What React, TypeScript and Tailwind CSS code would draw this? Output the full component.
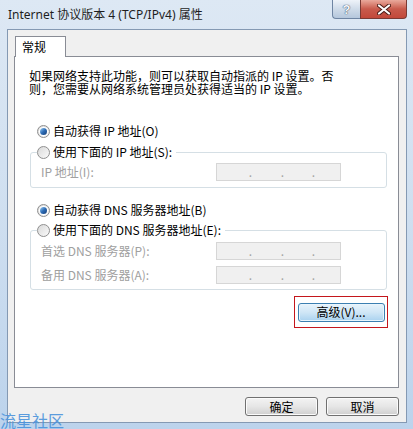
import type { ReactNode } from 'react'

function Radio({ checked }: { checked?: boolean }) {
    return (
        <span className="flex size-[13px] shrink-0 items-center justify-center rounded-full border border-[#8f8f8f] bg-gradient-to-br from-[#d9d9d9] to-[#fafafa]">
            {checked && (
                <span className="flex size-[9px] items-center justify-center rounded-full bg-white">
                    <span className="size-[7px] rounded-full bg-gradient-to-br from-[#9fd2f6] via-[#2d6cb5] to-[#173f78]" />
                </span>
            )}
        </span>
    )
}

function RadioRow({ checked, children, bg }: { checked?: boolean, children: ReactNode, bg?: boolean }) {
    return (
        <div className="relative z-10 ml-[22px] flex h-[14px] items-center">
            <div className={'flex items-center gap-[3px] pr-[4px] ' + (bg ? 'bg-white' : '')}>
                <Radio checked={checked} />
                <span className="leading-[14px]">{children}</span>
            </div>
        </div>
    )
}

function IpBox() {
    return (
        <div className="flex h-[18px] w-[125px] border border-[#d6d6d6] bg-[#f0f0f0] pl-[3px] text-[#a3a3a3]">
            <span className="w-[32px] text-right leading-[16px]">.</span>
            <span className="w-[32px] text-right leading-[16px]">.</span>
            <span className="w-[31px] text-right leading-[16px]">.</span>
        </div>
    )
}

function FieldRow({ label }: { label: string }) {
    return (
        <div className="flex items-center pl-[10px]">
            <span className="w-[175px] text-[#a0a0a0] leading-[14px]">{label}</span>
            <IpBox />
        </div>
    )
}

function WinButton({ children, focus, w }: { children: ReactNode, focus?: boolean, w: string }) {
    return (
        <button
            className={
                'flex h-[19px] items-center justify-center rounded-[3px] border leading-[14px] ' + w + ' ' +
                (focus
                    ? 'border-[#3c7fb1] bg-gradient-to-b from-[#e8f3fb] via-[#cfe6f6] to-[#a9d2ef] shadow-[inset_0_0_0_1px_#e9f5fd]'
                    : 'border-[#707070] bg-gradient-to-b from-[#f3f3f3] via-[#e6e6e6] to-[#cfcfcf] shadow-[inset_0_0_0_1px_#fbfbfb]')
            }
        >
            {children}
        </button>
    )
}

export default function App() {
    return (
        <div className="relative h-[429px] w-[413px] overflow-hidden bg-gradient-to-b from-[#dde8f4] via-[#cfdff0] to-[#bcd3ec] font-['Noto_Sans_CJK_SC','Noto_Sans',sans-serif] text-[12px] text-black">
            {/* title bar */}
            <div className="flex h-[29px] items-start justify-between pl-[8px] pr-[6px]">
                <span className="mt-[7px] font-['Noto_Sans','Noto_Sans_CJK_SC',sans-serif] text-[12px] leading-[16px] text-[#1e1e1e]">
                    Internet 协议版本 4 (TCP/IPv4) 属性
                </span>
                <div className="flex">
                    <div className="flex h-[19px] w-[28px] items-center justify-center rounded-bl-[4px] border border-t-0 border-r-0 border-[#6f85a3] bg-gradient-to-b from-[#eef3f9] via-[#cfdbe9] to-[#b5c7dc]">
                        <span className="font-['Liberation_Sans',sans-serif] text-[13px] font-bold leading-none text-[#f4f7fb] [text-shadow:0_0_1px_#3a4a60,0_0_1px_#3a4a60]">?</span>
                    </div>
                    <div className="flex h-[19px] w-[47px] items-center justify-center rounded-br-[4px] border border-t-0 border-[#7a3a34] bg-gradient-to-b from-[#e9a99c] via-[#c85a4c] to-[#c2483a]">
                        <svg width="14" height="11" viewBox="0 0 14 11">
                            <path d="M2 1.5 L12 9.5 M12 1.5 L2 9.5" stroke="#4a1a14" strokeWidth="4" strokeLinecap="round" />
                            <path d="M2 1.5 L12 9.5 M12 1.5 L2 9.5" stroke="#ffffff" strokeWidth="2.2" strokeLinecap="round" />
                        </svg>
                    </div>
                </div>
            </div>

            {/* client area */}
            <div className="ml-[7px] flex h-[394px] w-[400px] flex-col border border-[#8499b3] bg-[#f0f0f0] pt-[6px]">
                <div className="relative z-10 ml-[7px] flex h-[21px] w-[51px] items-center border border-b-0 border-[#898c95] bg-white pl-[6px] leading-[14px]">
                    常规
                </div>
                <div className="-mt-[1px] ml-[6px] flex h-[332px] w-[385px] flex-col border border-[#898c95] bg-white">
                    <p className="ml-[14px] mt-[12px] leading-[13px]">
                        如果网络支持此功能，则可以获取自动指派的 IP 设置。否<br />
                        则，您需要从网络系统管理员处获得适当的 IP 设置。
                    </p>

                    <div className="mt-[29px]">
                        <RadioRow checked>自动获得 IP 地址(O)</RadioRow>
                    </div>
                    <div className="mt-[7px]">
                        <RadioRow bg>使用下面的 IP 地址(S):</RadioRow>
                    </div>
                    <div className="-mt-[7px] ml-[15px] flex h-[36px] w-[357px] flex-col rounded-[3px] border border-[#d5dfe5] pt-[10px]">
                        <FieldRow label="IP 地址(I):" />
                    </div>

                    <div className="mt-[15px]">
                        <RadioRow checked>自动获得 DNS 服务器地址(B)</RadioRow>
                    </div>
                    <div className="mt-[6px]">
                        <RadioRow bg>使用下面的 DNS 服务器地址(E):</RadioRow>
                    </div>
                    <div className="-mt-[7px] ml-[15px] flex h-[60px] w-[357px] flex-col gap-[6px] rounded-[3px] border border-[#d5dfe5] pt-[11px]">
                        <FieldRow label="首选 DNS 服务器(P):" />
                        <FieldRow label="备用 DNS 服务器(A):" />
                    </div>

                    <div className="mr-[10px] mt-[6px] flex h-[32px] w-[94px] items-center justify-center self-end border border-[#c4161c]">
                        <WinButton focus w="w-[87px]">高级(V)...</WinButton>
                    </div>
                </div>

                <div className="mr-[7px] mt-[9px] flex justify-end gap-[8px]">
                    <WinButton w="w-[73px]">确定</WinButton>
                    <WinButton w="w-[73px]">取消</WinButton>
                </div>
            </div>

            {/* watermark */}
            <span className="absolute left-[0px] top-[410px] text-[16px] leading-[20px] text-[#4b93dc] opacity-90">流星社区</span>
        </div>
    )
}
